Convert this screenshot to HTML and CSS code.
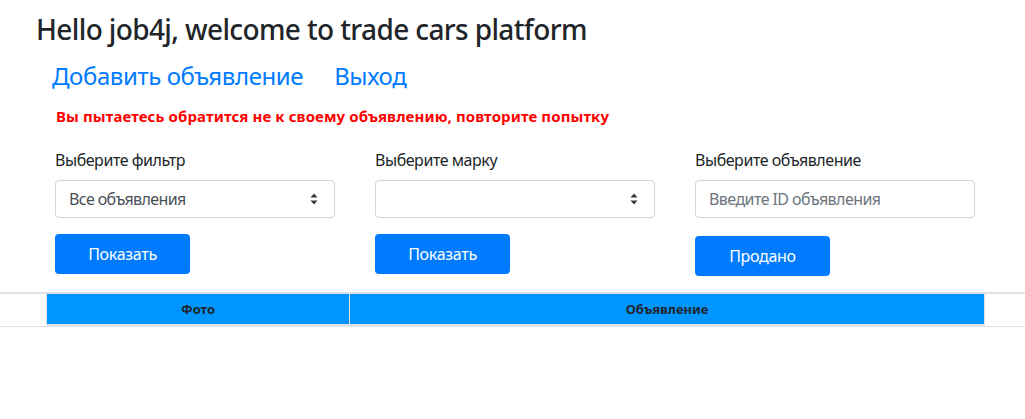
FILE: index.html
```html
<!DOCTYPE html>
<html lang="ru">
<head>
<meta charset="utf-8">
<title>Trade cars</title>
<link rel="stylesheet" href="styles.css">
</head>
<body>
<h3 class="greeting">Hello job4j, welcome to trade cars platform</h3>
<nav class="nav">
  <a class="nav-link" href="#">Добавить объявление</a>
  <a class="nav-link" href="#">Выход</a>
</nav>
<p class="error">Вы пытаетесь обратится не к своему объявлению, повторите попытку</p>
<div class="filters">
  <div class="col">
    <label class="label">Выберите фильтр</label>
    <div class="select">
      <span class="select-text">Все объявления</span>
      <svg class="arrows" width="8" height="12" viewBox="0 0 8 12"><path d="M4 0.5 L7.5 4.5 H0.5 Z M4 11.5 L7.5 7.5 H0.5 Z" fill="#343a40"/></svg>
    </div>
    <button class="btn">Показать</button>
  </div>
  <div class="col">
    <label class="label">Выберите марку</label>
    <div class="select">
      <span class="select-text"></span>
      <svg class="arrows" width="8" height="12" viewBox="0 0 8 12"><path d="M4 0.5 L7.5 4.5 H0.5 Z M4 11.5 L7.5 7.5 H0.5 Z" fill="#343a40"/></svg>
    </div>
    <button class="btn">Показать</button>
  </div>
  <div class="col">
    <label class="label">Выберите объявление</label>
    <input class="input" type="text" placeholder="Введите ID объявления">
    <button class="btn btn-sold">Продано</button>
  </div>
</div>
<div class="table-wrap">
  <table class="table">
    <thead>
      <tr>
        <th class="th-photo">Фото</th>
        <th class="th-ad">Объявление</th>
      </tr>
    </thead>
  </table>
</div>
</body>
</html>
```

FILE: styles.css
```css
* { box-sizing: border-box; }
body {
  margin: 0;
  font-family: "Noto Sans", "Open Sans", sans-serif;
  color: #212529;
  background: #fff;
}
.greeting {
  margin: 12px 0 0 36px;
  font-size: 28px;
  line-height: 34px;
  font-weight: 500;
  letter-spacing: -0.62px;
}
.nav {
  display: flex;
  gap: 31px;
  margin: 15px 0 0 52px;
}
.nav-link {
  font-size: 24px;
  line-height: 29px;
  color: #007bff;
  text-decoration: none;
  letter-spacing: -0.4px;
}
.error {
  margin: 17px 0 0 56px;
  font-size: 15px;
  line-height: 18px;
  font-weight: 700;
  color: #ff0000;
  letter-spacing: 0.11px;
}
.filters {
  display: grid;
  grid-template-columns: repeat(3, 280px);
  column-gap: 40px;
  margin: 26px 0 0 55px;
}
.col {
  display: flex;
  flex-direction: column;
  align-items: flex-start;
}
.label {
  font-size: 16px;
  line-height: 19px;
  letter-spacing: -0.45px;
}
.select, .input {
  margin-top: 10px;
  width: 280px;
  height: 38px;
  border: 1px solid #ced4da;
  border-radius: 4px;
  background: #fff;
  font-family: inherit;
  font-size: 16px;
}
.select {
  display: flex;
  align-items: center;
  justify-content: space-between;
  padding: 0 16px 0 13px;
  color: #495057;
  letter-spacing: -0.6px;
}
.input {
  padding: 0 13px;
  color: #495057;
  outline: none;
  letter-spacing: -0.56px;
}
.input::placeholder { color: #6c757d; }
.btn {
  margin-top: 16px;
  width: 135px;
  height: 40px;
  border: none;
  border-radius: 4px;
  background: #007bff;
  color: #fff;
  font-family: inherit;
  font-size: 16px;
  letter-spacing: -0.3px;
}
.btn-sold { margin-top: 18px; }
.table-wrap {
  margin-top: 16px;
  border-top: 2px solid #dee2e6;
  border-bottom: 1px solid #dee2e6;
  padding: 0 40px 0 46px;
}
.table {
  width: 100%;
  border-collapse: collapse;
  background: #fff;
}
.table th {
  height: 31px;
  padding: 0;
  background: #0096ff;
  font-size: 13px;
  font-weight: 700;
  color: #212529;
  text-align: center;
  border-left: 1px solid #dee2e6;
  border-right: 1px solid #dee2e6;
  border-bottom: 2px solid #dee2e6;
}
.th-photo { width: 303px; }
.th-ad { border-left: 1px solid #eef4fa; }
```
